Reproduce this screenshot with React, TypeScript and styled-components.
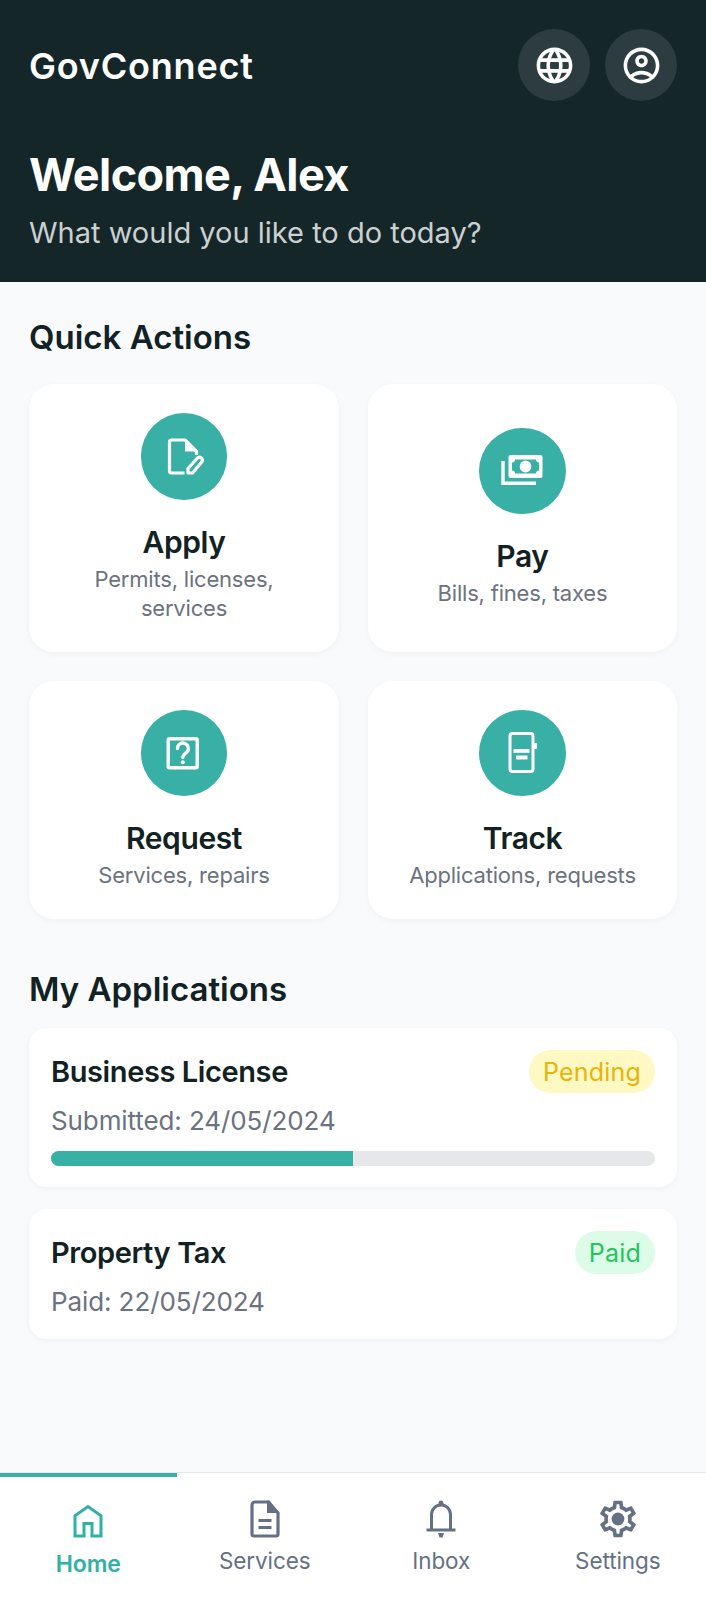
import React from "react";
import styled, { createGlobalStyle } from "styled-components";
import { MdOutlineLanguage, MdOutlineAccountCircle } from "react-icons/md";

const Global = createGlobalStyle`
  html, body { margin: 0; padding: 0; background: #f8fafc; }
  * { box-sizing: border-box; }
  body { font-family: Inter, "Noto Sans", sans-serif; }
`;

const Page = styled.div`
  width: 706px;
  height: 1600px;
  display: flex;
  flex-direction: column;
  background: #f8fafc;
`;

const Header = styled.header`
  height: 282px;
  flex: none;
  background: #152629;
  padding: 29px 29px 0 29px;
  color: #fff;
`;

const TopRow = styled.div`
  display: flex;
  align-items: center;
  justify-content: space-between;
`;

const Brand = styled.div`
  font-size: 36px;
  line-height: 46px;
  margin-top: 2px;
  font-weight: 600;
  letter-spacing: 0.8px;
`;

const IconGroup = styled.div`
  display: flex;
  gap: 15px;
`;

const RoundButton = styled.div`
  width: 72px;
  height: 72px;
  border-radius: 50%;
  background: #2d3c40;
  display: flex;
  align-items: center;
  justify-content: center;
  color: #fff;
  font-size: 43px;
`;

const Welcome = styled.h1`
  margin: 46px 0 0;
  font-size: 45px;
  line-height: 56px;
  font-weight: 700;
  letter-spacing: -0.6px;
`;

const Sub = styled.p`
  margin: 8px 0 0;
  font-size: 29px;
  line-height: 44px;
  font-weight: 400;
  letter-spacing: 0;
  color: #cbd0d1;
`;

const Main = styled.main`
  flex: 1;
  padding: 34px 29px 0;
`;

const SectionTitle = styled.h2`
  margin: 0;
  font-size: 33px;
  line-height: 42px;
  font-weight: 600;
  letter-spacing: 0;
  color: #112124;
`;

const Grid = styled.div`
  margin-top: 26px;
  display: grid;
  grid-template-columns: 310px 309px;
  grid-template-rows: 268px 238px;
  column-gap: 29px;
  row-gap: 29px;
`;

const ActionCard = styled.div`
  background: #fff;
  border-radius: 25px;
  box-shadow: 0 2px 6px rgba(0, 0, 0, 0.04);
  padding: 0 29px;
  display: flex;
  flex-direction: column;
  align-items: center;
  justify-content: center;
  text-align: center;
`;

const ActionIcon = styled.div`
  width: 86.5px;
  height: 86.5px;
  border-radius: 50%;
  background: #38b0a6;
  display: flex;
  align-items: center;
  justify-content: center;
`;

const ActionTitle = styled.div`
  margin-top: 24px;
  font-size: 30px;
  line-height: 36px;
  font-weight: 600;
  letter-spacing: -0.4px;
  color: #112124;
`;

const ActionSub = styled.div`
  margin-top: 5px;
  font-size: 22px;
  line-height: 29px;
  letter-spacing: -0.2px;
  color: #6b7280;
`;

const AppsTitle = styled(SectionTitle)`
  margin-top: 49px;
`;

const AppList = styled.div`
  margin-top: 18px;
  display: flex;
  flex-direction: column;
  gap: 22px;
`;

const AppCard = styled.div<{ $h: number }>`
  background: #fff;
  border-radius: 18px;
  box-shadow: 0 2px 6px rgba(0, 0, 0, 0.04);
  padding: 22px 22px 0;
  height: ${(p) => p.$h}px;
`;

const AppRow = styled.div`
  display: flex;
  align-items: center;
  justify-content: space-between;
`;

const AppName = styled.div`
  font-size: 29px;
  font-weight: 600;
  letter-spacing: -0.4px;
  color: #112124;
`;

const Badge = styled.div<{ $bg: string; $fg: string }>`
  height: 43px;
  padding: 0 14px;
  border-radius: 22px;
  display: flex;
  align-items: center;
  font-size: 25px;
  letter-spacing: 0.2px;
  background: ${(p) => p.$bg};
  color: ${(p) => p.$fg};
`;

const AppDate = styled.div`
  margin-top: 10px;
  font-size: 26px;
  line-height: 36px;
  letter-spacing: -0.1px;
  color: #6b7280;
`;

const Track = styled.div`
  margin-top: 12px;
  height: 15px;
  border-radius: 8px;
  background: #e5e7eb;
  overflow: hidden;
`;

const Fill = styled.div`
  height: 100%;
  background: #38b0a6;
`;

const Nav = styled.nav`
  flex: none;
  height: 128px;
  background: #fff;
  border-top: 1px solid #e5e7eb;
  display: grid;
  grid-template-columns: repeat(4, 1fr);
`;

const NavItem = styled.div<{ $active?: boolean }>`
  display: flex;
  flex-direction: column;
  align-items: center;
  padding-top: 21.5px;
  border-top: 4px solid ${(p) => (p.$active ? "#38b0a6" : "transparent")};
  color: ${(p) => (p.$active ? "#2fb1a5" : "#667085")};
  svg { display: block; }
`;

const NavLabel = styled.div<{ $active?: boolean }>`
  margin-top: ${(p) => (p.$active ? "10px" : "7.5px")};
  font-size: ${(p) => (p.$active ? "23px" : "22.5px")};
  line-height: 30px;
  font-weight: ${(p) => (p.$active ? 600 : 400)};
  letter-spacing: -0.1px;
`;

const GearSvg = styled.svg`
  margin: -2px 0;
`;

const ApplyIcon = () => (
  <svg width="44" height="44" viewBox="0 0 44 44" fill="none" stroke="#fff" strokeWidth="3.2" strokeLinejoin="round">
    <path d="M22.500 38H9.500a2 2 0 0 1-2-2V7a2 2 0 0 1 2-2H23L34.500 16.500V20" />
    <path d="M23 6.500 33 16.500H23z" fill="#fff" stroke="none" />
    <path d="M26 38v-4.500L35.500 23a3 3 0 0 1 4.500 3.800L30.500 38z" />
  </svg>
);

const PayIcon = () => (
  <svg width="44" height="44" viewBox="0 0 44 44" fill="none">
    <path d="M2 12v22.300h33" stroke="#fff" strokeWidth="3.400" />
    <rect x="7.500" y="6" width="34" height="23" rx="2" fill="#fff" />
    <path d="M14 10.500h21a3 3 0 0 0 3 3v8a3 3 0 0 0-3 3H14a3 3 0 0 0-3-3v-8a3 3 0 0 0 3-3z" fill="#38b0a6" />
    <ellipse cx="24.500" cy="17.500" rx="5.800" ry="6" fill="#fff" />
  </svg>
);

const RequestIcon = () => (
  <svg width="44" height="44" viewBox="0 0 44 44" fill="none" stroke="#fff">
    <rect x="6.200" y="7.700" width="29" height="29" rx="1.500" strokeWidth="3.400" />
    <path d="M15.500 17.500a5.400 5.400 0 1 1 9 4c-2 1.500-3.700 2.500-3.700 5" strokeWidth="3.300" strokeLinecap="round" />
    <circle cx="20.800" cy="31.300" r="2" fill="#fff" stroke="none" />
  </svg>
);

const TrackIcon = () => (
  <svg width="44" height="44" viewBox="0 0 44 44" fill="none">
    <rect x="9" y="2.500" width="23" height="38" rx="2.500" stroke="#fff" strokeWidth="3" />
    <rect x="33" y="12" width="3" height="6" rx="1" fill="#fff" />
    <rect x="12.500" y="18" width="16" height="3.800" fill="#fff" />
    <rect x="15" y="24.500" width="11.500" height="4" fill="#fff" />
  </svg>
);

const HomeIcon = () => (
  <svg width="36" height="40" viewBox="0 0 36 40" fill="none" stroke="currentColor" strokeWidth="3">
    <path d="M5 37V16.800L18 7.500l13 9.300V37h-9V24.500h-8V37z" strokeLinejoin="miter" />
  </svg>
);

const DocIcon = () => (
  <svg width="36" height="40" viewBox="0 0 36 40" fill="none">
    <path d="M8 3h13l10 11v21a2 2 0 0 1-2 2H7a2 2 0 0 1-2-2V6a3 3 0 0 1 3-3z" stroke="currentColor" strokeWidth="3.200" />
    <path d="M20 1.500h2.500L32.500 14H20z" fill="currentColor" />
    <rect x="11.500" y="20" width="13" height="3" fill="currentColor" />
    <rect x="11.500" y="27" width="13" height="3" fill="currentColor" />
  </svg>
);

const BellIcon = () => (
  <svg width="36" height="40" viewBox="0 0 36 40" fill="none">
    <path d="M8.500 31V15.500a9.500 9.500 0 0 1 19 0V31" stroke="currentColor" strokeWidth="3" />
    <path d="M3.500 29.500h29v3h-29z" fill="currentColor" />
    <path d="M15 34h6l-1.500 4.500h-3z" fill="currentColor" />
    <path d="M15.500 6.500V4a2.500 2.500 0 0 1 5 0v2.500z" fill="currentColor" />
  </svg>
);

const GearIcon = () => (
  <GearSvg width="44" height="44" viewBox="0 0 24 24" fill="currentColor">
    <path d="M19.430 12.980c.04-.32.07-.64.07-.98 0-.34-.03-.66-.07-.98l2.110-1.650c.19-.15.24-.42.12-.64l-2-3.460c-.09-.16-.26-.25-.44-.25-.06 0-.12.01-.17.03l-2.490 1c-.52-.4-1.080-.73-1.690-.98l-.38-2.650C14.460 2.180 14.250 2 14 2h-4c-.25 0-.46.18-.49.42l-.38 2.650c-.61.25-1.170.59-1.690.98l-2.490-1c-.06-.02-.12-.03-.18-.03-.17 0-.34.09-.43.25l-2 3.460c-.13.22-.07.49.12.64l2.110 1.650c-.04.32-.07.65-.07.98 0 .33.03.66.07.98l-2.110 1.650c-.19.15-.24.42-.12.64l2 3.460c.09.16.26.25.44.25.06 0 .12-.01.17-.03l2.490-1c.52.4 1.080.73 1.690.98l.38 2.650c.03.24.24.42.49.42h4c.25 0 .46-.18.49-.42l.38-2.650c.61-.25 1.170-.59 1.690-.98l2.490 1c.06.02.12.03.18.03.17 0 .34-.09.43-.25l2-3.460c.12-.22.07-.49-.12-.64l-2.110-1.650zm-1.980-1.710c.04.31.05.52.05.73 0 .21-.02.43-.05.73l-.14 1.130.89.7 1.080.84-.7 1.210-1.270-.51-1.040-.42-.9.68c-.43.32-.84.56-1.250.73l-1.060.43-.16 1.130-.2 1.350h-1.400l-.19-1.350-.16-1.130-1.060-.43c-.43-.18-.83-.41-1.230-.71l-.91-.7-1.060.43-1.270.51-.7-1.210 1.080-.84.89-.7-.14-1.130c-.03-.31-.05-.54-.05-.74s.02-.43.05-.73l.14-1.130-.89-.7-1.080-.84.7-1.210 1.270.51 1.040.42.9-.68c.43-.32.84-.56 1.250-.73l1.060-.43.16-1.130.2-1.350h1.390l.19 1.350.16 1.130 1.060.43c.43.18.83.41 1.230.71l.91.7 1.060-.43 1.270-.51.7 1.210-1.070.85-.89.7.14 1.130z" />
    <circle cx="12" cy="12" r="3.500" />
  </GearSvg>
);

const actions = [
  { title: "Apply", sub: "Permits, licenses, services", icon: <ApplyIcon /> },
  { title: "Pay", sub: "Bills, fines, taxes", icon: <PayIcon /> },
  { title: "Request", sub: "Services, repairs", icon: <RequestIcon /> },
  { title: "Track", sub: "Applications, requests", icon: <TrackIcon /> },
];

export default function App() {
  return (
    <Page>
      <Global />
      <Header>
        <TopRow>
          <Brand>GovConnect</Brand>
          <IconGroup>
            <RoundButton><MdOutlineLanguage /></RoundButton>
            <RoundButton><MdOutlineAccountCircle /></RoundButton>
          </IconGroup>
        </TopRow>
        <Welcome>Welcome, Alex</Welcome>
        <Sub>What would you like to do today?</Sub>
      </Header>
      <Main>
        <SectionTitle>Quick Actions</SectionTitle>
        <Grid>
          {actions.map((a) => (
            <ActionCard key={a.title}>
              <ActionIcon>{a.icon}</ActionIcon>
              <ActionTitle>{a.title}</ActionTitle>
              <ActionSub>{a.sub}</ActionSub>
            </ActionCard>
          ))}
        </Grid>
        <AppsTitle>My Applications</AppsTitle>
        <AppList>
          <AppCard $h={159}>
            <AppRow>
              <AppName>Business License</AppName>
              <Badge $bg="#fef9c3" $fg="#eab308">Pending</Badge>
            </AppRow>
            <AppDate>Submitted: 24/05/2024</AppDate>
            <Track><Fill style={{ width: "50%" }} /></Track>
          </AppCard>
          <AppCard $h={130}>
            <AppRow>
              <AppName>Property Tax</AppName>
              <Badge $bg="#dcfce7" $fg="#22c55e">Paid</Badge>
            </AppRow>
            <AppDate>Paid: 22/05/2024</AppDate>
          </AppCard>
        </AppList>
      </Main>
      <Nav>
        <NavItem $active><HomeIcon /><NavLabel $active>Home</NavLabel></NavItem>
        <NavItem><DocIcon /><NavLabel>Services</NavLabel></NavItem>
        <NavItem><BellIcon /><NavLabel>Inbox</NavLabel></NavItem>
        <NavItem><GearIcon /><NavLabel>Settings</NavLabel></NavItem>
      </Nav>
    </Page>
  );
}
